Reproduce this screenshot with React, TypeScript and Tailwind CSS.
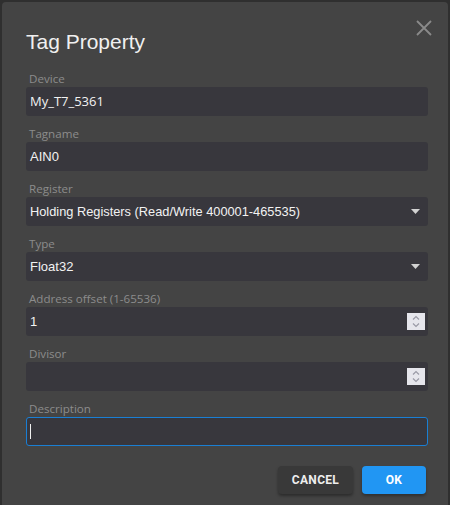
import React from "react";

const labelCls = "h-[16px] text-[11.6px] leading-[16px] text-[#8c8c8c] pl-[3px]";
const boxCls = "h-[29px] rounded-[3px] bg-[#38373d] flex items-center pl-[4px] pr-[8px] text-[13px] text-[#f2f2f2]";

function Spinner() {
  return (
    <div className="w-[18px] h-[17px] bg-[#e6e6ec] flex flex-col items-center justify-center">
      <svg width="10" height="15" viewBox="0 0 10 15">
        <path d="M2 5.5 L5 2.5 L8 5.5" fill="none" stroke="#9a9aa6" strokeWidth="1.2" />
        <path d="M2 9.5 L5 12.5 L8 9.5" fill="none" stroke="#9a9aa6" strokeWidth="1.2" />
      </svg>
    </div>
  );
}

function Caret() {
  return (
    <svg width="9" height="5" viewBox="0 0 9 5">
      <path d="M0 0 L9 0 L4.5 5 Z" fill="#d2d2d2" />
    </svg>
  );
}

function Field({ label, children, last }: { label: string; children: React.ReactNode; last?: boolean }) {
  return (
    <div className={last ? "" : "mb-[10px]"}>
      <div className={labelCls} style={{ fontFamily: "'Open Sans', 'Noto Sans', sans-serif" }}>{label}</div>
      {children}
    </div>
  );
}

export default function App() {
  return (
    <div className="w-[450px] h-[505px] bg-[#2f2f2f] pt-[2px] pl-[2px] overflow-hidden">
      <div className="relative w-[446px] h-[520px] bg-[#444444] rounded-[4px] pl-[24px] pr-[20px] pt-[28px]">
        <svg className="absolute left-[413px] top-[17px]" width="18" height="18" viewBox="0 0 18 18">
          <path d="M2 2 L16 16 M16 2 L2 16" stroke="#8a8a8a" strokeWidth="1.8" />
        </svg>
        <div
          className="text-[21px] leading-[24px] text-[#f0f0f0] mb-[17px]"
          style={{ fontFamily: "'Liberation Sans', Arial, sans-serif" }}
        >
          Tag Property
        </div>
        <div style={{ fontFamily: "'Liberation Sans', Arial, sans-serif" }}>
          <Field label="Device">
            <div className={boxCls} style={{ fontFamily: "'Open Sans', 'Noto Sans', sans-serif" }}>My_T7_5361</div>
          </Field>
          <Field label="Tagname">
            <div className={boxCls}>AIN0</div>
          </Field>
          <Field label="Register">
            <div className={boxCls + " justify-between"}>
              <span className="text-[12.8px]">Holding Registers (Read/Write 400001-465535)</span>
              <Caret />
            </div>
          </Field>
          <Field label="Type">
            <div className={boxCls + " justify-between"}>
              <span>Float32</span>
              <Caret />
            </div>
          </Field>
          <Field label="Address offset (1-65536)">
            <div className={boxCls + " justify-between !pr-[3px]"}>
              <span>1</span>
              <Spinner />
            </div>
          </Field>
          <Field label="Divisor">
            <div className={boxCls + " justify-end !pr-[3px]"}>
              <Spinner />
            </div>
          </Field>
          <Field label="Description" last>
            <div className={boxCls + " border border-[#1a7fd4] !pl-[3px]"}>
              <div className="w-[1px] h-[15px] bg-[#f0f0f0]" />
            </div>
          </Field>
        </div>
        <div className="flex justify-end gap-[9px] mt-[20px] pr-[2px]" style={{ fontFamily: "Roboto, sans-serif" }}>
          <button className="w-[75px] h-[28px] rounded-[4px] bg-[#393939] text-[#eeeeee] text-[12px] font-bold tracking-[0.3px] shadow-[0_2px_3px_rgba(0,0,0,0.35)]">
            CANCEL
          </button>
          <button className="w-[64px] h-[28px] rounded-[4px] bg-[#2196f3] text-white text-[12px] font-bold tracking-[0.3px] shadow-[0_2px_3px_rgba(0,0,0,0.3)]">
            OK
          </button>
        </div>
      </div>
    </div>
  );
}
